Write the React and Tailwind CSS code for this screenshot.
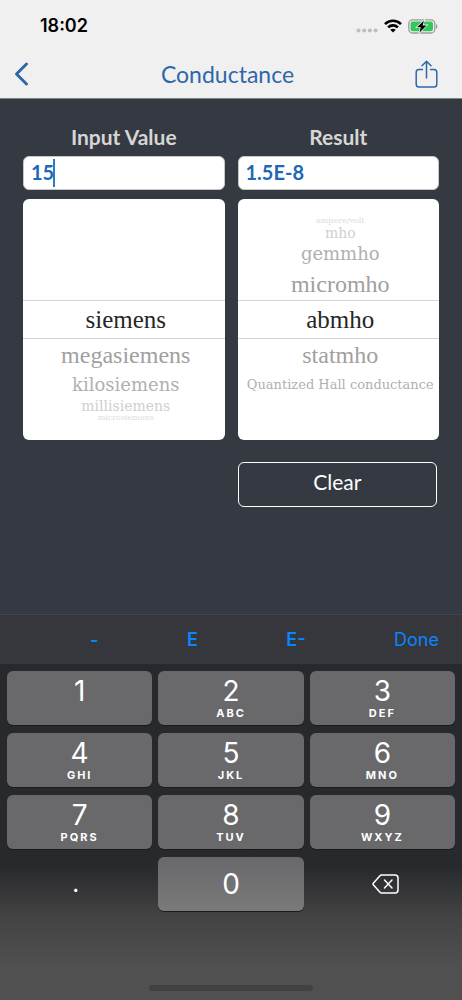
import React, { useState } from "react";
import clsx from "clsx";

const FROM_UNITS = {
  above: [],
  selected: "siemens",
  below: ["megasiemens", "kilosiemens", "millisiemens", "microsiemens"],
};

const TO_UNITS = {
  above: ["micromho", "gemmho", "mho", "ampere/volt"],
  selected: "abmho",
  below: ["statmho", "Quantized Hall conductance"],
};

const KEYS = [
  { digit: "1", letters: "" },
  { digit: "2", letters: "ABC" },
  { digit: "3", letters: "DEF" },
  { digit: "4", letters: "GHI" },
  { digit: "5", letters: "JKL" },
  { digit: "6", letters: "MNO" },
  { digit: "7", letters: "PQRS" },
  { digit: "8", letters: "TUV" },
  { digit: "9", letters: "WXYZ" },
];

// Rows get shorter and fainter the further they are from the selection
const ROW_STYLES = [
  "h-8 text-[24px] leading-8 text-[#a0a0a0]",
  "h-7 font-['DejaVu_Serif',serif] text-[18px] leading-7 text-[#b0b0b0]",
  "h-[14px] font-['DejaVu_Serif',serif] text-[14px] leading-[14px] text-[#cfcfcf]",
  "h-[10px] font-['DejaVu_Serif',serif] text-[8px] leading-[10px] text-[#dcdcdc]",
];

const StatusBar = () => (
  <div className="flex h-[50px] items-center justify-between pt-0.5 pl-10 pr-6 font-['Inter',sans-serif]">
    <span className="text-[18px] leading-6 font-semibold text-black">18:02</span>
    <div className="flex items-center gap-[6px]">
      <svg width="22" height="14" viewBox="0 0 22 14" fill="#bdbdbd" aria-hidden="true">
        <circle cx="2.5" cy="11.5" r="2" />
        <circle cx="8.2" cy="11.5" r="2" />
        <circle cx="13.9" cy="11.5" r="2" />
        <circle cx="19.6" cy="11.5" r="2" />
      </svg>
      <svg width="18" height="14" viewBox="0 0 18 14" aria-hidden="true">
        <g fill="none" stroke="#000" strokeWidth="2.6">
          <path d="M1 5.1C5.5.6 12.5.6 17 5.1" />
          <path d="M4.1 8.4c2.8-2.7 7-2.7 9.8 0" />
        </g>
        <path d="M9 13.4 6.2 10.7c1.6-1.4 4-1.4 5.6 0z" fill="#000" />
      </svg>
      <svg width="30" height="15" viewBox="0 0 30 15" aria-hidden="true">
        <rect x="0.8" y="0.8" width="26" height="13.2" rx="3.8" fill="none" stroke="#9b9b9b" strokeWidth="1.3" />
        <path d="M28 5v5c1.8-.7 1.8-4.3 0-5z" fill="#9b9b9b" />
        <rect x="2.5" y="2.5" width="22.5" height="9.8" rx="2.2" fill="#34c759" />
        <path
          d="M16 1.5 9 8.3h3.8L11.5 13.5l7-7.1h-3.9z"
          fill="#000"
          stroke="#f0f0f0"
          strokeWidth="1.6"
          paintOrder="stroke"
        />
      </svg>
    </div>
  </div>
);

const Header = () => (
  <header className="border-b border-[#80868a] bg-[#f0f0f0]">
    <StatusBar />
    <nav className="grid h-12 grid-cols-[1fr_auto_1fr] items-center pl-[13px] pr-5">
      <a href="#units" aria-label="Back" className="justify-self-start">
        <svg width="18" height="26" viewBox="0 0 18 26" fill="none" stroke="#2f67a8" strokeWidth="3" strokeLinecap="round" strokeLinejoin="round">
          <path d="M13.5 3 3.5 13l10 10" />
        </svg>
      </a>
      <h1 className="text-[23px] leading-8 text-[#2f67a8]">Conductance</h1>
      <button type="button" aria-label="Share" className="mr-1 justify-self-end">
        <svg width="23" height="28" viewBox="0 0 23 28" fill="none" stroke="#2f67a8" strokeWidth="1.5" strokeLinecap="round" strokeLinejoin="round">
          <path d="M7.5 9.5H4A2.8 2.8 0 0 0 1.2 12.3v11.9A2.8 2.8 0 0 0 4 27h15a2.8 2.8 0 0 0 2.8-2.8V12.3A2.8 2.8 0 0 0 19 9.5h-3.5" />
          <path d="M11.5 18V1.5M7 5.8l4.5-4.5L16 5.8" />
        </svg>
      </button>
    </nav>
  </header>
);

const WheelRow = ({ name, level }) => (
  <button
    type="button"
    className={clsx(
      "block w-full shrink-0 whitespace-nowrap text-center",
      ROW_STYLES[level],
      name.length > 20 && "text-[13px]!"
    )}
  >
    {name}
  </button>
);

const UnitWheel = ({ label, units }) => (
  <div
    role="group"
    aria-label={label}
    className="mt-[9px] grid grid-rows-[101px_39px_101px] overflow-hidden rounded-md bg-white font-['Liberation_Serif',serif]"
  >
    <div className="flex flex-col-reverse pl-1">
      {units.above.map((name, i) => (
        <WheelRow key={name} name={name} level={i} />
      ))}
    </div>
    <button
      type="button"
      aria-pressed="true"
      className="border-y border-[#d4d4d4] pl-1 text-center text-[25px] leading-9 text-[#262626]"
    >
      {units.selected}
    </button>
    <div className="flex flex-col pl-1">
      {units.below.map((name, i) => (
        <WheelRow key={name} name={name} level={i} />
      ))}
    </div>
  </div>
);

const ValueField = ({ id, label, value, onChange, caret }) => (
  <div className="flex flex-col">
    <label htmlFor={id} className="text-center text-[21px] leading-7 font-bold text-[#d6d6d6]">
      {label}
    </label>
    <div className="relative mt-[5px]">
      <input
        id={id}
        type="text"
        value={value}
        readOnly={!onChange}
        onChange={onChange}
        className="block h-[34px] w-full rounded-md border border-[#c8c8c8] bg-white px-[7px] pb-0.5 text-[20px] font-bold text-[#2068b4] outline-none"
      />
      {caret && <span className="absolute top-[3px] left-[30px] h-7 w-0.5 bg-[#2f78c8]" />}
    </div>
  </div>
);

const AccessoryBar = () => (
  <div className="flex h-[50px] items-center justify-between border-t border-[#40454e] bg-[#36373c] pr-[23px] pl-[90px] text-[18px] leading-6 text-[#0a84ff]">
    <button type="button" className="font-semibold">-</button>
    <button type="button" className="font-semibold">E</button>
    <button type="button" className="font-semibold">E-</button>
    <button type="button">Done</button>
  </div>
);

const Keypad = () => (
  <div className="bg-linear-to-b from-[#28292d] from-60% via-[#434343] via-75% to-[#505050] to-90% pt-[7px]">
    <div className="grid auto-rows-[54px] grid-cols-3 gap-x-[6px] gap-y-2 px-[7px] text-white">
      {KEYS.map(({ digit, letters }) => (
        <button
          key={digit}
          type="button"
          className="flex flex-col items-center rounded-md bg-[#69696b] pt-1 shadow-[0_1px_0_#1b1b1d]"
        >
          <span className="text-[28px] leading-8">{digit}</span>
          <span className="text-[11px] leading-3 font-bold tracking-[2px]">{letters}</span>
        </button>
      ))}
      <button type="button" className="pr-2 text-[24px] leading-8">.</button>
      <button
        type="button"
        className="rounded-md bg-linear-to-b from-[#69696d] to-[#7a7a7a] text-[28px] leading-8 shadow-[0_1px_0_#1b1b1d]"
      >
        0
      </button>
      <button type="button" aria-label="Delete" className="flex items-center justify-center pl-1.5">
        <svg width="27" height="20" viewBox="0 0 27 20" fill="none" stroke="#fff" strokeWidth="1.5" strokeLinecap="round" strokeLinejoin="round">
          <path d="M9.5 1H23a3 3 0 0 1 3 3v12a3 3 0 0 1-3 3H9.5a2 2 0 0 1-1.5-.7L1.5 11a1.5 1.5 0 0 1 0-2L8 1.7A2 2 0 0 1 9.5 1z" />
          <path d="m12.5 6 7.500 8M20 6l-7.500 8" />
        </svg>
      </button>
    </div>
    <div className="flex h-[89px] items-end justify-center pb-[9px]">
      <div className="h-[6px] w-[164px] rounded-full bg-[#414141]" />
    </div>
  </div>
);

const App = () => {
  const [input, setInput] = useState("15");

  return (
    <div className="flex min-h-screen flex-col bg-[#353941] font-['Lato',sans-serif]">
      <Header />

      <main className="grid flex-1 grid-cols-2 content-start gap-x-[13px] px-[23px] pt-6">
        <div>
          <ValueField
            id="input-value"
            label="Input Value"
            value={input}
            onChange={(e) => setInput(e.target.value)}
            caret
          />
          <UnitWheel label="Input unit" units={FROM_UNITS} />
        </div>
        <div>
          <ValueField id="result" label="Result" value="1.5E-8" />
          <UnitWheel label="Result unit" units={TO_UNITS} />
          <div className="mt-[22px] pr-0.5">
            <button
              type="button"
              onClick={() => setInput("")}
              className="h-[45px] w-full rounded-md border border-white pb-1.5 text-[21px] leading-7 text-white"
            >
              Clear
            </button>
          </div>
        </div>
      </main>

      {/* Keyboard */}
      <div className="font-['Inter',sans-serif]">
        <AccessoryBar />
        <Keypad />
      </div>
    </div>
  );
};

export default App;
